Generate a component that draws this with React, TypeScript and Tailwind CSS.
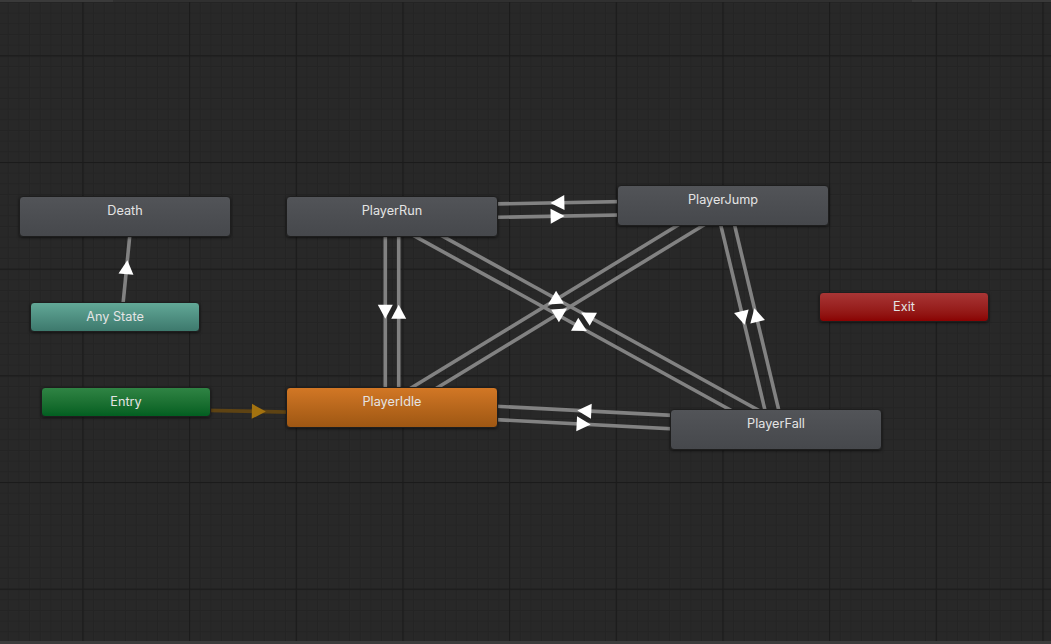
import React from "react";

type P = [number, number];

const OFF = 6.7;

function Transition({ a, b, line = "#828282", arrow = "#ffffff" }: { a: P; b: P; line?: string; arrow?: string }) {
  const dx = b[0] - a[0];
  const dy = b[1] - a[1];
  const len = Math.hypot(dx, dy);
  const ux = dx / len;
  const uy = dy / len;
  const ox = -uy * OFF;
  const oy = ux * OFF;
  const x1 = a[0] + ox, y1 = a[1] + oy, x2 = b[0] + ox, y2 = b[1] + oy;
  const mx = (x1 + x2) / 2, my = (y1 + y2) / 2;
  const L = 7, W = 7.5;
  const tip = [mx + ux * L, my + uy * L];
  const b1 = [mx - ux * L - uy * W, my - uy * L + ux * W];
  const b2 = [mx - ux * L + uy * W, my - uy * L - ux * W];
  return (
    <g>
      <line x1={x1} y1={y1} x2={x2} y2={y2} stroke={line} strokeWidth={3.6} />
      <polygon points={`${tip[0]},${tip[1]} ${b1[0]},${b1[1]} ${b2[0]},${b2[1]}`} fill={arrow} />
    </g>
  );
}

// canvas coordinates (canvas starts at y=2 in the page)
const Y0 = 2;
const c = (x: number, y: number): P => [x, y - Y0];

const C = {
  death: c(125, 216),
  any: c(115, 317),
  entry: c(126, 402),
  idle: c(392, 407.5),
  run: c(392, 216),
  runJ: c(392, 212.6),
  jump: c(723, 205.5),
  jumpR: c(723, 206.3),
  fall: c(776, 427.5),
};

type NodeDef = { x: number; y: number; w: number; h: number; label: string; cls: string };

const GREY = "bg-gradient-to-b from-[#525458] to-[#46484c]";

const NODES: NodeDef[] = [
  { x: 19, y: 196, w: 212, h: 41, label: "Death", cls: GREY },
  { x: 30, y: 302, w: 170, h: 30, label: "Any State", cls: "bg-gradient-to-b from-[#62a897] to-[#3d796d]" },
  { x: 41, y: 387, w: 170, h: 30, label: "Entry", cls: "bg-gradient-to-b from-[#2f8444] to-[#025f21]" },
  { x: 286, y: 196, w: 212, h: 41, label: "PlayerRun", cls: GREY },
  { x: 617, y: 185, w: 212, h: 41, label: "PlayerJump", cls: GREY },
  { x: 286, y: 387, w: 212, h: 41, label: "PlayerIdle", cls: "bg-gradient-to-b from-[#d27725] to-[#9e5713]" },
  { x: 670, y: 409, w: 212, h: 41, label: "PlayerFall", cls: GREY },
  { x: 819, y: 292, w: 170, h: 30, label: "Exit", cls: "bg-gradient-to-b from-[#a83535] to-[#8a0202]" },
];

function Node({ n }: { n: NodeDef }) {
  return (
    <div
      className={`absolute rounded-[4px] border border-[#1e1e1e] shadow-[0_1px_3px_rgba(0,0,0,0.55)] ${n.cls}`}
      style={{ left: n.x, top: n.y - Y0, width: n.w, height: n.h }}
    >
      <div
        className="w-full pt-[6px] text-center text-[12.7px] leading-[16px] text-[#e4e4e4]"
        style={{ fontFamily: "Inter, 'Noto Sans', sans-serif" }}
      >
        {n.label}
      </div>
    </div>
  );
}

export default function App() {
  return (
    <div className="flex h-[644px] w-[1051px] flex-col overflow-hidden bg-[#282828]">
      <div className="flex h-[2px] shrink-0">
        <div className="w-[113px] bg-[#3a3a3a]" />
        <div className="flex-1 bg-[#303030]" />
        <div className="w-[139px] bg-[#3a3a3a]" />
      </div>

      <div className="relative flex-1">
        <svg className="absolute inset-0" width={1051} height={639}>
          <defs>
            <pattern id="minor" x={82.4} y={55.3 - Y0} width={10.667} height={10.667} patternUnits="userSpaceOnUse">
              <rect x={0} y={0} width={10.667} height={1} fill="#242424" />
              <rect x={0} y={0} width={1} height={10.667} fill="#242424" />
            </pattern>
            <pattern id="major" x={82.4} y={55.3 - Y0} width={106.67} height={106.67} patternUnits="userSpaceOnUse">
              <rect x={0} y={0} width={106.67} height={1.2} fill="#1b1b1b" />
              <rect x={0} y={0} width={1.2} height={106.67} fill="#1b1b1b" />
            </pattern>
          </defs>
          <rect width={1051} height={639} fill="url(#minor)" />
          <rect width={1051} height={639} fill="url(#major)" />

          <Transition a={C.any} b={C.death} />
          <Transition a={C.entry} b={C.idle} line="#5e4313" arrow="#a3720f" />
          <Transition a={C.runJ} b={C.jumpR} />
          <Transition a={C.jumpR} b={C.runJ} />
          <Transition a={C.run} b={C.idle} />
          <Transition a={C.idle} b={C.run} />
          <Transition a={C.run} b={C.fall} />
          <Transition a={C.fall} b={C.run} />
          <Transition a={C.jump} b={C.idle} />
          <Transition a={C.idle} b={C.jump} />
          <Transition a={C.jump} b={C.fall} />
          <Transition a={C.fall} b={C.jump} />
          <Transition a={C.idle} b={C.fall} />
          <Transition a={C.fall} b={C.idle} />
        </svg>

        {NODES.map((n) => (
          <Node key={n.label} n={n} />
        ))}
      </div>

      <div className="h-[3px] shrink-0 bg-[#3c3c3c]" />
    </div>
  );
}
